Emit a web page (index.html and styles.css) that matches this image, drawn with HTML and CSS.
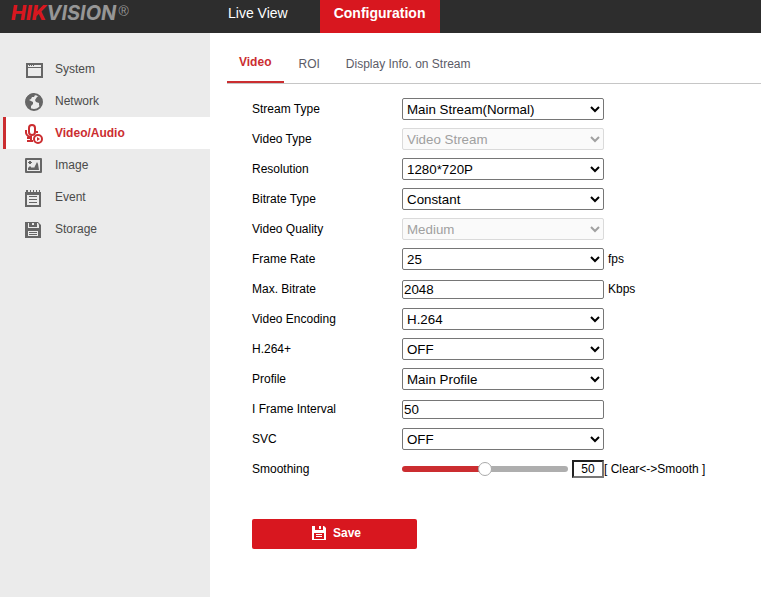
FILE: index.html
```html
<!DOCTYPE html>
<html lang="en">
<head>
<meta charset="utf-8">
<title>Configuration</title>
<link rel="stylesheet" href="styles.css">
</head>
<body>
<header class="topbar">
  <div class="logo"><span class="logo-red">HIK</span>VISION<span class="logo-mark">®</span></div>
  <nav class="topnav">
    <a href="#live">Live View</a>
    <a href="#config" class="current">Configuration</a>
  </nav>
</header>
<div class="layout">
  <nav class="sidebar">
    <a href="#system">
      <svg class="icon" viewBox="0 0 20 20"><path d="M2 3h17v15H2zM4 8v8h13V8zM4 5v2h13V5z" fill="#666" fill-rule="evenodd"/><path d="M5 5h1v1H5zM7 5h1v1H7zM9 5h1v1H9z" fill="#666"/></svg>
      System</a>
    <a href="#network">
      <svg class="icon" viewBox="0 0 20 20"><circle cx="10" cy="10" r="8" fill="#ebebeb" stroke="#666" stroke-width="2"/><path d="M2 6l4-4 4-1 1 2-1 2H8L7 7 5 8l4 2v2l-2 2v3l-2-1-3-5zM13 2l3 2 2 4v4l-2 3-1-2v-2l-3-1-1-2 2-3 2-1z" fill="#666"/></svg>
      Network</a>
    <a href="#video" class="current">
      <svg class="icon" viewBox="0 0 20 20" fill="none" stroke="#cb2d30" stroke-width="2"><rect x="5" y="1" width="6" height="10" rx="3"/><path d="M2 6v3q1 4 6 4M7 13v4M3 14h4M3 17h6M12 8h2"/><circle cx="14" cy="15" r="4"/><path d="M13 13v4l3-2z" fill="#cb2d30" stroke="none"/></svg>
      Video/Audio</a>
    <a href="#image">
      <svg class="icon" viewBox="0 1 20 20"><path d="M2 3h15q1 0 1 1v13q0 1-1 1H2q-1 0-1-1V4q0-1 1-1zM3 5v11h13V5z" fill="#666" fill-rule="evenodd"/><path d="M4 15v-2l2-2 2 2 1-1 1 1 3-6 1 2 1 6zM5 6h2v1h1v1H7v1H5V8H4V7h1z" fill="#666"/></svg>
      Image</a>
    <a href="#event">
      <svg class="icon" viewBox="0 0 20 20"><path d="M1 4h1V2h2v2h2V2h1v2h2V2h1v2h2V2h1v2h2V2h1v2h1v15H1zM3 7v10h12V7z" fill="#666" fill-rule="evenodd"/><path d="M5 8h8v1H5zM5 11h8v1H5zM5 14h8v1H5z" fill="#666"/></svg>
      Event</a>
    <a href="#storage">
      <svg class="icon" viewBox="0 0 20 20"><path d="M1 2h13l3 3v13H1z" fill="#666"/><path d="M3 3h1v5h11V5l-1-2h-1v4H5V3h3v2h2V3H3zM4 11h10v5H4z" fill="#ebebeb"/><path d="M5 12h8v1H5zM5 14h8v1H5z" fill="#666"/></svg>
      Storage</a>
  </nav>
  <main class="content">
    <nav class="tabs">
      <a href="#tab-video" class="current">Video</a>
      <a href="#tab-roi">ROI</a>
      <a href="#tab-info">Display Info. on Stream</a>
    </nav>
    <form class="settings">
      <div class="row"><label for="stream">Stream Type</label><select id="stream"><option>Main Stream(Normal)</option></select></div>
      <div class="row"><label for="vtype">Video Type</label><select id="vtype" disabled><option>Video Stream</option></select></div>
      <div class="row"><label for="res">Resolution</label><select id="res"><option>1280*720P</option></select></div>
      <div class="row"><label for="btype">Bitrate Type</label><select id="btype"><option>Constant</option></select></div>
      <div class="row"><label for="quality">Video Quality</label><select id="quality" disabled><option>Medium</option></select></div>
      <div class="row"><label for="fps">Frame Rate</label><select id="fps"><option>25</option></select><span class="unit">fps</span></div>
      <div class="row"><label for="max">Max. Bitrate</label><input class="field" id="max" type="text" value="2048"><span class="unit">Kbps</span></div>
      <div class="row"><label for="enc">Video Encoding</label><select id="enc"><option>H.264</option></select></div>
      <div class="row"><label for="plus">H.264+</label><select id="plus"><option>OFF</option></select></div>
      <div class="row"><label for="profile">Profile</label><select id="profile"><option>Main Profile</option></select></div>
      <div class="row"><label for="iframe">I Frame Interval</label><input class="field" id="iframe" type="text" value="50"></div>
      <div class="row"><label for="svc">SVC</label><select id="svc"><option>OFF</option></select></div>
      <div class="row"><label for="smooth">Smoothing</label><input class="slider" id="smooth" type="range" min="0" max="100" value="50"><input class="amount" type="text" value="50" aria-label="Smoothing value"><span>[ Clear&lt;-&gt;Smooth ]</span></div>
      <button class="save" type="button">
        <svg class="save-icon" viewBox="0 0 14 14"><path d="M0 0h12l2 2v12H0zM3 0v4h8V0H9v3H7V0zM2 7v6h10V7z" fill="#fff" fill-rule="evenodd"/><path d="M4 8h6v1H4zM4 10h6v1H4z" fill="#fff"/></svg>
        Save</button>
    </form>
  </main>
</div>
</body>
</html>
```
FILE: styles.css
```css
* { box-sizing: border-box; }
body {
  margin: 0;
  min-height: 100vh;
  display: flex;
  flex-direction: column;
  font: 12px/16px "Liberation Sans", Arial, sans-serif;
  color: #000;
  background: #fff;
}
a { text-decoration: none; color: inherit; }
.topbar { display: flex; height: 33px; background: #2d2d2d; color: #fff; }
.logo {
  display: flex;
  flex: 0 0 210px;
  padding-left: 11px;
  font: italic 700 20px/26px Inter, sans-serif;
  color: #969696;
}
.logo-red { color: #d8171f; font-weight: 800; }
.logo-mark { margin-left: 2px; font: 14px/22px "Liberation Sans", sans-serif; }
.topnav { display: flex; font-size: 14px; line-height: 26px; }
.topnav a { padding: 0 14px; }
.topnav a:first-child { padding: 0 32px 0 18px; }
.topnav .current { min-width: 120px; background: #d8171f; font-weight: bold; }
.layout { display: flex; flex: 1; }
.sidebar { flex: 0 0 210px; padding-top: 20px; background: #ebebeb; color: #4a4a4a; }
.sidebar a {
  display: flex;
  align-items: center;
  gap: 11px;
  height: 32px;
  margin-left: 3px;
  padding-left: 21px;
}
.icon { width: 20px; height: 20px; margin-top: 2px; }
.sidebar .current {
  padding-left: 18px;
  border-left: 3px solid #cb2d30;
  background: #fff;
  color: #cb2d30;
  font-weight: bold;
}
.content { flex: 1; min-width: 0; }
.tabs {
  display: flex;
  gap: 2px;
  height: 51px;
  margin-left: 17px;
  border-bottom: 1px solid #c6c6c6;
  color: #5b5b66;
}
.tabs a { padding: 23px 12px 0; }
.tabs .current {
  height: 50px;
  padding: 21px 13px 0 12px;
  border-bottom: 2px solid #cb2d30;
  color: #cb2d30;
  font-weight: bold;
}
.settings { padding: 10px 0 0 42px; }
.row { display: flex; align-items: center; height: 30px; }
.row label { flex: 0 0 150px; }
select, .field { width: 202px; font-family: inherit; }
select {
  height: 22px;
  border: 1px solid #767676;
  border-radius: 2px;
  background-color: #fff;
  color: #000;
}
select:disabled { border-color: #dadada; background-color: #fafafa; color: #a0a0a0; opacity: 1; }
.field { height: 19px; padding: 0 1px; border: 1px solid #767676; border-radius: 2px; }
.unit { margin-left: 4px; }
.slider {
  appearance: none;
  width: 166px;
  height: 14px;
  margin: 0 4px 0 0;
  background: none;
}
.slider::-webkit-slider-runnable-track {
  height: 6px;
  border-radius: 3px;
  background: linear-gradient(to right, #cb2d30 50%, #aeaeae 50%);
}
.slider::-webkit-slider-thumb {
  appearance: none;
  width: 14px;
  height: 14px;
  margin-top: -4px;
  border: 1px solid #aaa;
  border-radius: 50%;
  background: #fff;
}
.amount {
  width: 32px;
  height: 18px;
  padding: 0;
  border: 2px solid;
  border-color: #222 #767676 #767676 #222;
  font: inherit;
  text-align: center;
}
.save {
  display: flex;
  align-items: center;
  justify-content: center;
  gap: 7px;
  width: 165px;
  height: 30px;
  margin-top: 35px;
  padding: 0 0 2px 4px;
  border: 0;
  border-radius: 2px;
  background: #d8171f;
  color: #fff;
  font: bold 12px/16px "Liberation Sans", Arial, sans-serif;
}
.save-icon { width: 14px; height: 14px; }
```
